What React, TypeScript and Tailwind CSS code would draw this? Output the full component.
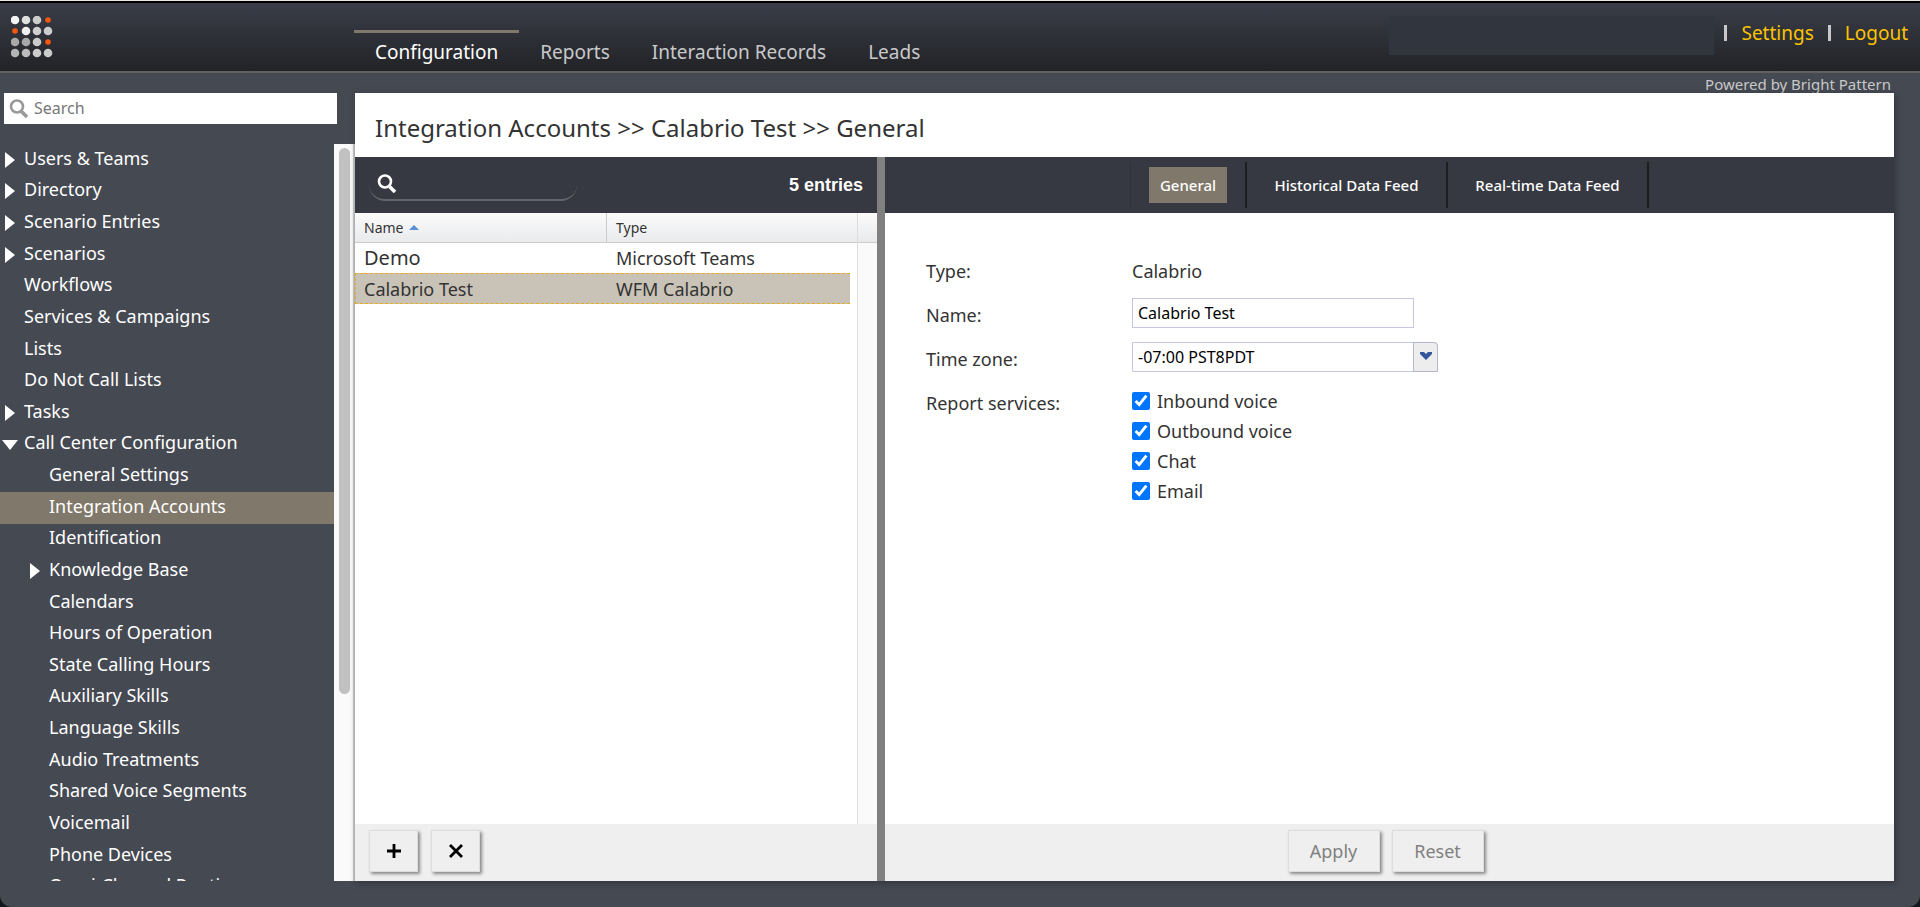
import { useState } from "react";

const DOTS = [
  ["#f4f4f4", "#dedede", "#cccccc", "hot"],
  ["hot", "#efefef", "#cfcfcf", "#cccccc"],
  ["#a8a8a8", "#a8a8a8", "#cccccc", "hot"],
  ["#b4b4b4", "#bcbcbc", "#cccccc", "#cccccc"],
];

type Item = { label: string; level?: 1; arrow?: "closed" | "open" };

const MENU: Item[] = [
  { label: "Users & Teams", arrow: "closed" },
  { label: "Directory", arrow: "closed" },
  { label: "Scenario Entries", arrow: "closed" },
  { label: "Scenarios", arrow: "closed" },
  { label: "Workflows" },
  { label: "Services & Campaigns" },
  { label: "Lists" },
  { label: "Do Not Call Lists" },
  { label: "Tasks", arrow: "closed" },
  { label: "Call Center Configuration", arrow: "open" },
  { label: "General Settings", level: 1 },
  { label: "Integration Accounts", level: 1 },
  { label: "Identification", level: 1 },
  { label: "Knowledge Base", level: 1, arrow: "closed" },
  { label: "Calendars", level: 1 },
  { label: "Hours of Operation", level: 1 },
  { label: "State Calling Hours", level: 1 },
  { label: "Auxiliary Skills", level: 1 },
  { label: "Language Skills", level: 1 },
  { label: "Audio Treatments", level: 1 },
  { label: "Shared Voice Segments", level: 1 },
  { label: "Voicemail", level: 1 },
  { label: "Phone Devices", level: 1 },
  { label: "Omni-Channel Routing", level: 1 },
];

const TABS = ["Configuration", "Reports", "Interaction Records", "Leads"];
const SERVICES = ["Inbound voice", "Outbound voice", "Chat", "Email"];

function Logo() {
  return (
    <svg width="42" height="42" viewBox="0 0 42 42" aria-label="Bright Pattern">
      {DOTS.map((row, y) =>
        row.map((c, x) => (
          <circle
            key={`${x}-${y}`}
            cx={4 + x * 11}
            cy={4 + y * 11}
            r={c === "hot" ? 2.8 : 4.3}
            fill={c === "hot" ? "#f4570f" : c}
          />
        ))
      )}
    </svg>
  );
}

function Magnifier({ className }: { className: string }) {
  return (
    <svg viewBox="0 0 20 20" className={className} fill="none" stroke="currentColor">
      <circle cx="8" cy="7.5" r="6" strokeWidth="2.6" />
      <path d="M12.5 12.5L18 18" strokeWidth="3.6" />
    </svg>
  );
}

function Arrow({ kind }: { kind: "closed" | "open" }) {
  return kind === "closed" ? (
    <svg width="10" height="16" viewBox="0 0 10 16" fill="#fff"><path d="M0 0L10 8L0 16Z" /></svg>
  ) : (
    <svg width="16" height="10" viewBox="0 0 16 10" fill="#fff"><path d="M0 0H16L8 10Z" /></svg>
  );
}

function Header() {
  return (
    <header className="flex h-[72px] shrink-0 items-start border-t-2 border-b-2 border-t-black border-b-[#62605f] bg-linear-to-b from-[#3a3e49] to-[#222326]">
      <div className="w-[354px] shrink-0 pt-[13px] pl-[11px]">
        <Logo />
      </div>
      <nav className="flex grow pt-[27px]">
        {TABS.map((t, i) => (
          <a
            key={t}
            href="#"
            className={
              "border-t-3 px-[21px] pt-[5px] text-[19px] leading-7 " +
              (i === 0 ? "border-[#80786a] text-white" : "border-transparent text-[#c8c9cb]")
            }
          >
            {t}
          </a>
        ))}
      </nav>
      <div className="flex items-start">
        <div className="mt-[13px] mr-[10px] h-[39px] w-[325px] bg-[#31353d]" />
        <div className="mt-[14px] flex items-center pr-3 text-[19px] leading-8 text-[#fdc300]">
          <span className="h-4 w-[3px] bg-[#c8c8c8]" />
          <a href="#" className="px-[14px]">Settings</a>
          <span className="h-4 w-[3px] bg-[#c8c8c8]" />
          <a href="#" className="pl-[14px]">Logout</a>
        </div>
      </div>
    </header>
  );
}

function Sidebar() {
  return (
    <aside className="flex w-[355px] shrink-0 flex-col">
      <div className="ml-1 flex h-[31px] w-[333px] shrink-0 items-center bg-white pl-[5px]">
        <Magnifier className="h-5 w-5 text-[#999]" />
        <input
          aria-label="Search"
          placeholder="Search"
          className="min-w-0 grow bg-transparent pb-0.5 pl-[5px] text-base outline-none placeholder:text-[#777]"
        />
      </div>
      <div className="mt-5 flex min-h-0 grow overflow-hidden">
        <ul className="grid h-[759px] grow auto-rows-fr text-[18px] text-white">
          {MENU.map((m) => (
            <li key={m.label} className={m.label === "Integration Accounts" ? "bg-[#80786a]" : ""}>
              <a href="#" className={"flex h-full items-center " + (m.level ? "pl-[25px]" : "")}>
                <span className={"flex w-6 shrink-0 " + (m.arrow === "open" ? "pt-0.5 pl-0.5" : "pl-[5px]")}>
                  {m.arrow && <Arrow kind={m.arrow} />}
                </span>
                <span className="pb-[3px]">{m.label}</span>
              </a>
            </li>
          ))}
        </ul>
        <div className="w-[21px] shrink-0 border-r-2 border-[#d0d0d0] bg-[#fafafa] pt-1 pl-[5px]">
          <div className="h-[546px] w-[11px] rounded-full bg-[#c1c1c1]" />
        </div>
      </div>
    </aside>
  );
}

function AccountList() {
  return (
    <section className="flex w-[522px] shrink-0 flex-col">
      <div className="flex h-14 shrink-0 items-center justify-between bg-[#363941] px-[14px] text-white">
        <label className="flex h-8 w-[208px] items-center rounded-b-2xl border-b-2 border-[#62656c] pl-2">
          <Magnifier className="h-5 w-5 shrink-0" />
          <input aria-label="Search accounts" className="min-w-0 grow bg-transparent px-2 text-base outline-none" />
        </label>
        <span className="font-['Liberation_Sans',Arial,sans-serif] text-lg font-bold">5 entries</span>
      </div>
      <div className="flex min-h-0 grow">
        <div className="flex grow flex-col">
          <table className="w-full table-fixed border-separate border-spacing-0 text-left text-[#333]">
            <thead>
              <tr className="h-[30px] bg-linear-to-b from-[#fbfbfb] to-[#e9eaec] text-sm">
                <th className="w-[252px] border-r border-b border-[#ccc] pl-[9px] font-normal">
                  <span className="flex items-center gap-1.5">
                    Name
                    <svg width="10" height="5" viewBox="0 0 10 5" fill="#5b8fd6"><path d="M5 0L10 5H0Z" /></svg>
                  </span>
                </th>
                <th className="border-b border-[#ccc] pl-[9px] font-normal">Type</th>
              </tr>
            </thead>
            <tbody className="text-lg leading-7">
              <tr className="h-[30px]">
                <td className="pl-[9px] text-xl leading-7">Demo</td>
                <td className="pl-[9px]">Microsoft Teams</td>
              </tr>
            </tbody>
          </table>
          <table className="mr-[7px] table-fixed border-separate border-spacing-0 border border-r-0 border-dashed border-[#e5ac1e] bg-[#c9c2b6] text-lg leading-7 text-[#333]">
            <tbody>
              <tr className="h-[29px]">
                <td className="w-[251px] pl-2">Calabrio Test</td>
                <td className="pl-[9px]">WFM Calabrio</td>
              </tr>
            </tbody>
          </table>
        </div>
        <div className="w-5 shrink-0 border-l border-[#ddd] bg-[#fafafa]">
          <div className="h-[30px] border-b border-[#ccc] bg-linear-to-b from-[#fbfbfb] to-[#e9eaec]" />
        </div>
      </div>
      <footer className="flex h-[57px] shrink-0 items-center gap-[13px] bg-[#efefef] pb-1 pl-[14px]">
        <button aria-label="Add" className="flex h-[42px] w-[49px] items-center justify-center border border-[#ddd] bg-[#efefef] shadow-[2px_2px_3px_#888]">
          <svg width="14" height="14" viewBox="0 0 14 14" stroke="#000" strokeWidth="2.8"><path d="M7 0V14M0 7H14" /></svg>
        </button>
        <button aria-label="Delete" className="flex h-[42px] w-[49px] items-center justify-center border border-[#ddd] bg-[#efefef] shadow-[2px_2px_3px_#888]">
          <svg width="14" height="14" viewBox="0 0 14 14" stroke="#000" strokeWidth="2.8"><path d="M1 1L13 13M13 1L1 13" /></svg>
        </button>
      </footer>
    </section>
  );
}

function Details() {
  const [checked, setChecked] = useState<string[]>(SERVICES);

  const toggle = (s: string) =>
    setChecked(checked.includes(s) ? checked.filter((c) => c !== s) : [...checked, s]);

  return (
    <section className="flex min-w-0 grow flex-col">
      <div className="flex h-14 shrink-0 items-center justify-center bg-[#363941] text-[15px] font-medium text-white">
        <div className="flex h-[46px] items-center border-r-2 border-l border-r-[#1c1e22] border-l-[#2e3138] px-[18px]">
          <button className="h-9 w-[78px] bg-[#80786a]">General</button>
        </div>
        <button className="h-[46px] w-[201px] border-r-2 border-[#1c1e22]">Historical Data Feed</button>
        <button className="h-[46px] w-[201px] border-r-2 border-[#1c1e22]">Real-time Data Feed</button>
      </div>
      <form className="grow pt-9 pl-[41px] text-lg text-[#333]">
        <div className="flex h-11 items-center">
          <span className="w-[206px]">Type:</span>
          <span>Calabrio</span>
        </div>
        <div className="flex h-11 items-center">
          <label htmlFor="name" className="w-[206px]">Name:</label>
          <input id="name" defaultValue="Calabrio Test" className="mb-1 h-[30px] w-[282px] border border-[#c5c7dc] px-[5px] text-base text-black outline-none" />
        </div>
        <div className="flex h-11 items-center">
          <label htmlFor="tz" className="w-[206px]">Time zone:</label>
          <div className="relative mb-1">
            <select id="tz" className="block h-[30px] w-[306px] appearance-none rounded-tr-sm border border-[#c5c7dc] bg-white px-[5px] text-base text-black outline-none">
              <option>-07:00 PST8PDT</option>
            </select>
            <span className="pointer-events-none absolute inset-y-0 right-0 flex w-[25px] items-center justify-center rounded-tr-sm border border-[#b5b8cc] bg-[#ededed] pb-0.5">
              <svg width="12" height="8" viewBox="0 0 12 8" fill="#34569c"><path d="M0 0H4L6 2L8 0H12V2L6 8L0 2Z" /></svg>
            </span>
          </div>
        </div>
        <fieldset className="flex">
          <legend className="float-left w-[206px] pt-2.5 leading-6">Report services:</legend>
          <div className="pt-[5px]">
            {SERVICES.map((s) => (
              <label key={s} className="flex h-[30px] items-center gap-[7px]">
                <input type="checkbox" checked={checked.includes(s)} onChange={() => toggle(s)} className="h-[18px] w-[18px] accent-[#0075ff]" />
                {s}
              </label>
            ))}
          </div>
        </fieldset>
      </form>
      <footer className="flex h-[57px] shrink-0 items-center justify-center gap-3 bg-[#efefef] pr-2 pb-1 text-lg text-[#808080]">
        <button className="h-[42px] w-[92px] border border-[#ddd] shadow-[2px_2px_3px_#888]">Apply</button>
        <button className="h-[42px] w-[92px] border border-[#ddd] shadow-[2px_2px_3px_#888]">Reset</button>
      </footer>
    </section>
  );
}

export default function App() {
  return (
    <div className="h-screen bg-[#10181c] font-['Noto_Sans',sans-serif]">
      <div className="flex h-full flex-col overflow-hidden rounded-b-xl border-t border-[#e8e8e8] bg-[#454952]">
        <Header />
        <p className="h-5 shrink-0 pr-[29px] text-right text-[15px] leading-[22px] text-[#c8c8c8]">
          Powered by Bright Pattern
        </p>
        <div className="flex min-h-0 grow pr-[26px] pb-[26px]">
          <Sidebar />
          <main className="flex min-w-0 grow flex-col bg-white shadow-[2px_2px_6px_#32353c]">
            <h1 className="h-16 shrink-0 px-5 pt-[5px] text-2xl leading-[60px] text-[#333]">
              Integration Accounts &gt;&gt; Calabrio Test &gt;&gt; General
            </h1>
            <div className="flex min-h-0 grow">
              <AccountList />
              <div className="w-2 shrink-0 bg-[#808080]" />
              <Details />
            </div>
          </main>
        </div>
      </div>
    </div>
  );
}
